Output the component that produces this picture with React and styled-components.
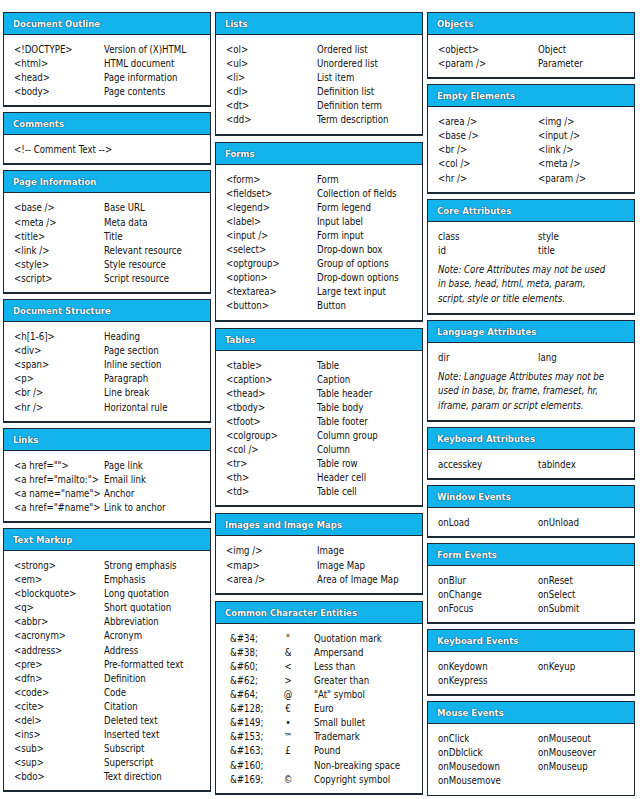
import React from 'react';
import styled, { createGlobalStyle } from 'styled-components';

const GlobalStyle = createGlobalStyle`
  html, body {
    margin: 0;
    padding: 0;
    background: #ffffff;
  }
  body {
    font-family: 'DejaVu Sans Condensed', 'DejaVu Sans', Verdana, sans-serif;
    font-size: 9.6px;
    color: #111111;
  }
`;

const Page = styled.div`
  display: grid;
  grid-template-columns: 208px 208px 208px;
  column-gap: 4px;
  padding: 12px 3px 0 3px;
  align-items: start;
`;

const Column = styled.div`
  display: flex;
  flex-direction: column;
  gap: ${(p) => p.$gap}px;
`;

const Box = styled.div`
  border: 1px solid #1d2a36;
  background: #ffffff;
  box-shadow: 0 1px 0 #1d2a36;
`;

const Header = styled.div`
  height: 21px;
  line-height: 21px;
  background: #13b3ec;
  border-bottom: 1px solid #1d2a36;
  padding: 0 9px;
  color: #ffffff;
  font-weight: bold;
  font-size: 9.5px;
  text-shadow: 0 0 1px #0b3550, 0 0 1px #0b3550;
  white-space: nowrap;
`;

const Body = styled.div`
  padding: 8px 10px 6px 10px;
`;

const Row = styled.div`
  display: grid;
  grid-template-columns: ${(p) => p.$keyWidth}px 1fr;
  line-height: 14.1px;
  white-space: nowrap;
`;

const EntityBody = styled.div`
  padding: 8px 10px 6px 14px;
`;

const EntityRow = styled.div`
  display: grid;
  grid-template-columns: 40px 36px 1fr;
  line-height: 14.1px;
  white-space: nowrap;
`;

const Glyph = styled.span`
  text-align: center;
`;

const Desc = styled.span`
  padding-left: ${(p) => p.$indent || 0}px;
`;

const Note = styled.p`
  margin: 5px 0 0 0;
  font-style: italic;
  line-height: 14.6px;
  white-space: nowrap;
`;

const Section = ({ title, rows, note, keyWidth = 90 }) => (
  <Box>
    <Header>{title}</Header>
    <Body>
      {rows.map(([a, b], i) => (
        <Row key={i} $keyWidth={keyWidth}>
          <span>{a}</span>
          <span>{b}</span>
        </Row>
      ))}
      {note && (
        <Note>
          {note.map((line, i) => (
            <React.Fragment key={i}>
              {i > 0 && <br />}
              {line}
            </React.Fragment>
          ))}
        </Note>
      )}
    </Body>
  </Box>
);

const entities = [
  ['&#34;', '"', 'Quotation mark'],
  ['&#38;', '&', 'Ampersand'],
  ['&#60;', '<', 'Less than'],
  ['&#62;', '>', 'Greater than'],
  ['&#64;', '@', '"At" symbol'],
  ['&#128;', '€', 'Euro'],
  ['&#149;', '•', 'Small bullet'],
  ['&#153;', '™', 'Trademark'],
  ['&#163;', '£', 'Pound'],
  ['&#160;', '', 'Non-breaking space'],
  ['&#169;', '©', 'Copyright symbol'],
];

const col1 = [
  {
    title: 'Document Outline',
    rows: [
      ['<!DOCTYPE>', 'Version of (X)HTML'],
      ['<html>', 'HTML document'],
      ['<head>', 'Page information'],
      ['<body>', 'Page contents'],
    ],
  },
  { title: 'Comments', rows: [['<!-- Comment Text -->', '']] },
  {
    title: 'Page Information',
    rows: [
      ['<base />', 'Base URL'],
      ['<meta />', 'Meta data'],
      ['<title>', 'Title'],
      ['<link />', 'Relevant resource'],
      ['<style>', 'Style resource'],
      ['<script>', 'Script resource'],
    ],
  },
  {
    title: 'Document Structure',
    rows: [
      ['<h[1-6]>', 'Heading'],
      ['<div>', 'Page section'],
      ['<span>', 'Inline section'],
      ['<p>', 'Paragraph'],
      ['<br />', 'Line break'],
      ['<hr />', 'Horizontal rule'],
    ],
  },
  {
    title: 'Links',
    rows: [
      ['<a href="">', 'Page link'],
      ['<a href="mailto:">', 'Email link'],
      ['<a name="name">', 'Anchor'],
      ['<a href="#name">', 'Link to anchor'],
    ],
  },
  {
    title: 'Text Markup',
    rows: [
      ['<strong>', 'Strong emphasis'],
      ['<em>', 'Emphasis'],
      ['<blockquote>', 'Long quotation'],
      ['<q>', 'Short quotation'],
      ['<abbr>', 'Abbreviation'],
      ['<acronym>', 'Acronym'],
      ['<address>', 'Address'],
      ['<pre>', 'Pre-formatted text'],
      ['<dfn>', 'Definition'],
      ['<code>', 'Code'],
      ['<cite>', 'Citation'],
      ['<del>', 'Deleted text'],
      ['<ins>', 'Inserted text'],
      ['<sub>', 'Subscript'],
      ['<sup>', 'Superscript'],
      ['<bdo>', 'Text direction'],
    ],
  },
];

const col2 = [
  {
    title: 'Lists',
    rows: [
      ['<ol>', 'Ordered list'],
      ['<ul>', 'Unordered list'],
      ['<li>', 'List item'],
      ['<dl>', 'Definition list'],
      ['<dt>', 'Definition term'],
      ['<dd>', 'Term description'],
    ],
  },
  {
    title: 'Forms',
    rows: [
      ['<form>', 'Form'],
      ['<fieldset>', 'Collection of fields'],
      ['<legend>', 'Form legend'],
      ['<label>', 'Input label'],
      ['<input />', 'Form input'],
      ['<select>', 'Drop-down box'],
      ['<optgroup>', 'Group of options'],
      ['<option>', 'Drop-down options'],
      ['<textarea>', 'Large text input'],
      ['<button>', 'Button'],
    ],
  },
  {
    title: 'Tables',
    rows: [
      ['<table>', 'Table'],
      ['<caption>', 'Caption'],
      ['<thead>', 'Table header'],
      ['<tbody>', 'Table body'],
      ['<tfoot>', 'Table footer'],
      ['<colgroup>', 'Column group'],
      ['<col />', 'Column'],
      ['<tr>', 'Table row'],
      ['<th>', 'Header cell'],
      ['<td>', 'Table cell'],
    ],
  },
  {
    title: 'Images and Image Maps',
    rows: [
      ['<img />', 'Image'],
      ['<map>', 'Image Map'],
      ['<area />', 'Area of Image Map'],
    ],
  },
];

const col3 = [
  {
    title: 'Objects',
    rows: [
      ['<object>', 'Object'],
      ['<param />', 'Parameter'],
    ],
  },
  {
    title: 'Empty Elements',
    rows: [
      ['<area />', '<img />'],
      ['<base />', '<input />'],
      ['<br />', '<link />'],
      ['<col />', '<meta />'],
      ['<hr />', '<param />'],
    ],
  },
  {
    title: 'Core Attributes',
    rows: [
      ['class', 'style'],
      ['id', 'title'],
    ],
    note: [
      'Note: Core Attributes may not be used',
      'in base, head, html, meta, param,',
      'script, style or title elements.',
    ],
  },
  {
    title: 'Language Attributes',
    rows: [['dir', 'lang']],
    note: [
      'Note: Language Attributes may not be',
      'used in base, br, frame, frameset, hr,',
      'iframe, param or script elements.',
    ],
  },
  { title: 'Keyboard Attributes', rows: [['accesskey', 'tabindex']] },
  { title: 'Window Events', rows: [['onLoad', 'onUnload']] },
  {
    title: 'Form Events',
    rows: [
      ['onBlur', 'onReset'],
      ['onChange', 'onSelect'],
      ['onFocus', 'onSubmit'],
    ],
  },
  {
    title: 'Keyboard Events',
    rows: [
      ['onKeydown', 'onKeyup'],
      ['onKeypress', ''],
    ],
  },
  {
    title: 'Mouse Events',
    rows: [
      ['onClick', 'onMouseout'],
      ['onDblclick', 'onMouseover'],
      ['onMousedown', 'onMouseup'],
      ['onMousemove', ''],
    ],
  },
];

const App = () => {
  return (
    <>
      <GlobalStyle />
      <Page>
        <Column $gap={6}>
          {col1.map((s) => (
            <Section key={s.title} {...s} />
          ))}
        </Column>
        <Column $gap={7}>
          {col2.map((s) => (
            <Section key={s.title} {...s} keyWidth={91} />
          ))}
          <Box>
            <Header>Common Character Entities</Header>
            <EntityBody>
              {entities.map(([code, ch, name]) => (
                <EntityRow key={code}>
                  <span>{code}</span>
                  <Glyph>{ch}</Glyph>
                  <Desc $indent={8}>{name}</Desc>
                </EntityRow>
              ))}
            </EntityBody>
          </Box>
        </Column>
        <Column $gap={6}>
          {col3.map((s) => (
            <Section key={s.title} {...s} keyWidth={100} />
          ))}
        </Column>
      </Page>
    </>
  );
};

export default App;
